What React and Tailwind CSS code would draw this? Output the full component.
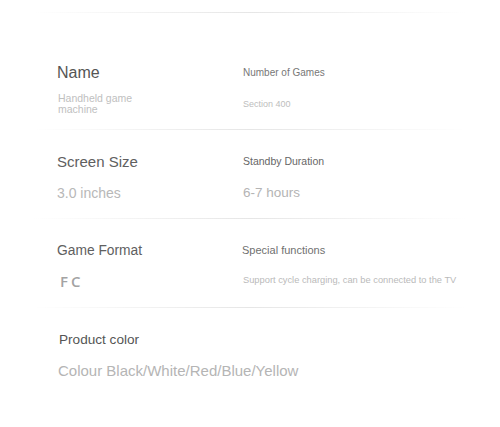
export default function App() {
  const line = (
    <div className="mx-[33px] h-px bg-gradient-to-r from-transparent via-[#e6e6e6] to-transparent" />
  );
  return (
    <div
      className="w-[500px] h-[427px] bg-white overflow-hidden"
      style={{ fontFamily: '"Liberation Sans", Arial, sans-serif' }}
    >
      <div className="h-[12px]" />
      {line}
      {/* Section 1 */}
      <div className="h-[116px] pt-[50px] flex">
        <div className="w-[243px] pl-[57px] flex flex-col">
          <div className="text-[16px] leading-[20px] text-[#555]">Name</div>
          <div className="mt-[10px] ml-px text-[10.5px] leading-[11px] text-[#c0c0c0] w-[90px]">
            Handheld game machine
          </div>
        </div>
        <div className="flex flex-col">
          <div className="text-[10px] leading-[20px] text-[#777]">Number of Games</div>
          <div className="mt-[15px] text-[9px] leading-[12px] text-[#bdbdbd]">Section 400</div>
        </div>
      </div>
      {line}
      {/* Section 2 */}
      <div className="h-[88px] pt-[22px] flex">
        <div className="w-[243px] pl-[57px] flex flex-col">
          <div className="text-[15px] leading-[20px] text-[#606060]">Screen Size</div>
          <div className="mt-[11px] text-[14px] leading-[20px] text-[#b8b8b8]">3.0 inches</div>
        </div>
        <div className="flex flex-col">
          <div className="text-[10.5px] leading-[18px] text-[#666]">Standby Duration</div>
          <div className="mt-[13px] text-[13.5px] leading-[20px] text-[#b4b4b4]">6-7 hours</div>
        </div>
      </div>
      {line}
      {/* Section 3 */}
      <div className="h-[88px] pt-[22px] flex">
        <div className="w-[242px] pl-[57px] flex flex-col">
          <div className="text-[13.8px] leading-[20px] text-[#606060]">Game Format</div>
          <div
            className="mt-[10px] ml-[3px] text-[15px] leading-[20px] font-semibold tracking-[3px] text-[#a3a3a3]"
            style={{ fontFamily: '"Open Sans", sans-serif' }}
          >
            FC
          </div>
        </div>
        <div className="flex flex-col">
          <div className="text-[11px] leading-[18px] text-[#707070]">Special functions</div>
          <div className="mt-[14px] ml-px text-[9.3px] leading-[14px] text-[#bababa] whitespace-nowrap">
            Support cycle charging, can be connected to the TV
          </div>
        </div>
      </div>
      {line}
      {/* Section 4 */}
      <div className="pt-[22px] pl-[59px] flex flex-col">
        <div className="text-[13.6px] leading-[20px] text-[#555]">Product color</div>
        <div className="mt-[11px] -ml-px text-[15px] leading-[20px] text-[#b5b5b5]">
          Colour Black/White/Red/Blue/Yellow
        </div>
      </div>
    </div>
  );
}
